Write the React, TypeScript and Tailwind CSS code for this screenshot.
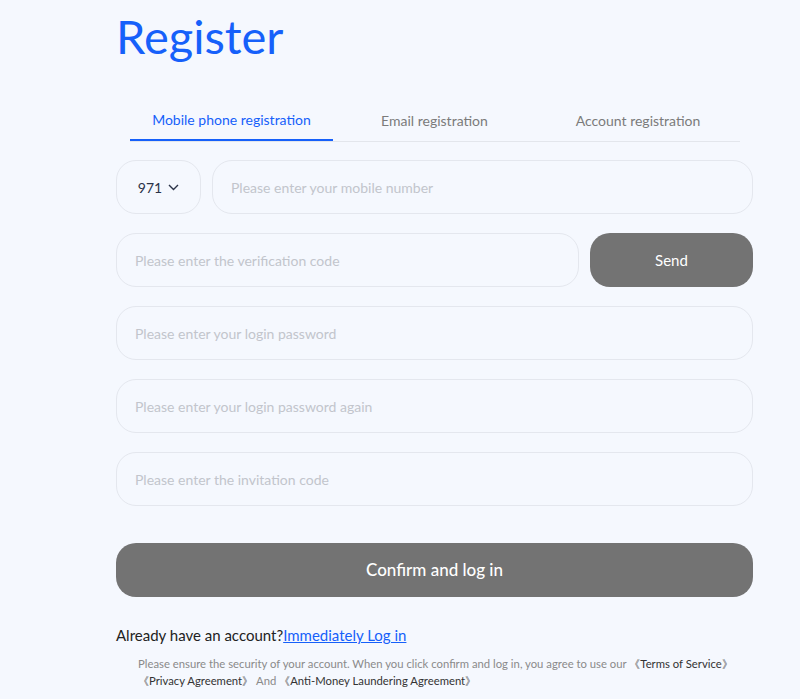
import React from "react";

const inputCls =
  "h-[54px] rounded-[20px] border border-[#e4e7ee] bg-[#f5f8fe] px-[18px] text-[14px] text-[#333] placeholder:text-[#c2c5cc] outline-none";

export default function App() {
  return (
    <div
      className="min-h-[699px] w-full bg-[#f5f8fe]"
      style={{ fontFamily: "Lato, 'Liberation Sans', sans-serif" }}
    >
      <div className="ml-[116px] w-[637px] pt-[6px]">
        <h1 className="text-[47px] leading-[60px] font-normal text-[#1660fa]">Register</h1>

        <div className="mt-[34px] mx-[14px] flex border-b border-[#e3e6ec] w-[610px]">
          <div className="w-[203px] h-[41px] flex items-center justify-center text-[14px] text-[#1660fa] border-b-2 border-[#1660fa] -mb-px">
            Mobile phone registration
          </div>
          <div className="w-[203px] h-[41px] flex items-center justify-center text-[14px] text-[#7b7b7b]">
            Email registration
          </div>
          <div className="w-[204px] h-[41px] flex items-center justify-center text-[14px] text-[#7b7b7b]">
            Account registration
          </div>
        </div>

        <div className="mt-[18px] flex flex-col gap-[19px]">
          <div className="flex gap-[11px]">
            <div className="w-[85px] h-[54px] rounded-[20px] border border-[#e4e7ee] flex items-center justify-center gap-[6px] text-[14px] text-[#2b3348]">
              <span>971</span>
              <svg width="11" height="7" viewBox="0 0 11 7" fill="none">
                <path d="M1 1l4.5 4.5L10 1" stroke="#2b3348" strokeWidth="1.4" />
              </svg>
            </div>
            <input className={inputCls + " flex-1"} placeholder="Please enter your mobile number" />
          </div>
          <div className="flex gap-[11px]">
            <input className={inputCls + " flex-1"} placeholder="Please enter the verification code" />
            <button className="w-[163px] h-[54px] rounded-[20px] bg-[#737373] text-white text-[15px]">
              Send
            </button>
          </div>
          <input className={inputCls} placeholder="Please enter your login password" />
          <input className={inputCls} placeholder="Please enter your login password again" />
          <input className={inputCls} placeholder="Please enter the invitation code" />
        </div>

        <button className="mt-[37px] w-full h-[54px] rounded-[20px] bg-[#737373] text-white text-[17px] font-medium">
          Confirm and log in
        </button>

        <div className="mt-[28px] text-[15px] leading-[20px] text-[#222]">
          Already have an account?
          <a className="text-[#1660fa] underline" href="#">
            Immediately Log in
          </a>
        </div>

        <div className="mt-[10px] pl-[22px] text-[11.3px] leading-[17px] text-[#8a8a8a]">
          <div className="whitespace-nowrap">
            Please ensure the security of your account. When you click confirm and log in, you agree to use our{" "}
            <span className="text-[#333]">《Terms of Service》</span>
          </div>
          <div className="whitespace-nowrap">
            <span className="text-[#333]">《Privacy Agreement》</span> And{" "}
            <span className="text-[#333]">《Anti-Money Laundering Agreement》</span>
          </div>
        </div>
      </div>
    </div>
  );
}
